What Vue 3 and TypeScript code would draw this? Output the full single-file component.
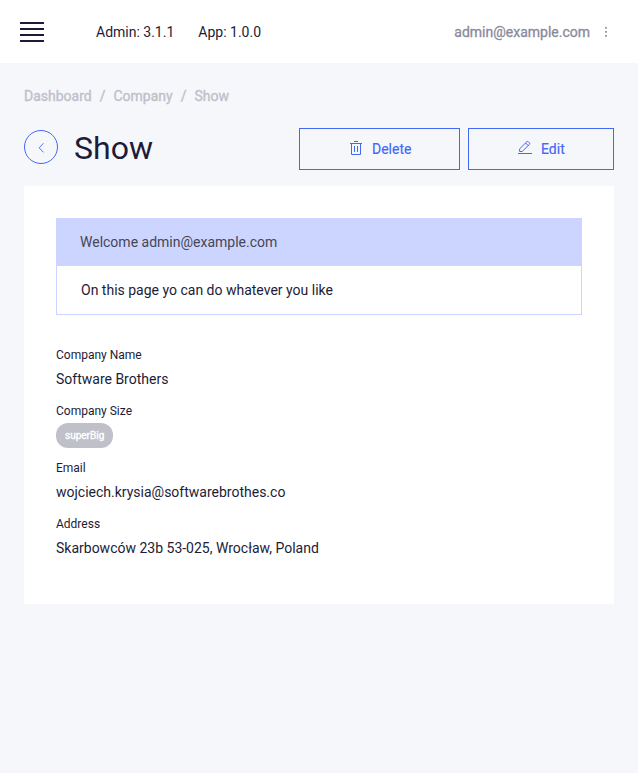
<script setup lang="ts">
interface Field {
  label: string
  value: string
  badge?: boolean
}

const email = 'admin@example.com'
const versions: string[] = ['Admin: 3.1.1', 'App: 1.0.0']
const crumbs: string[] = ['Dashboard', 'Company', 'Show']
const fields: Field[] = [
  { label: 'Company Name', value: 'Software Brothers' },
  { label: 'Company Size', value: 'superBig', badge: true },
  { label: 'Email', value: 'wojciech.krysia@softwarebrothes.co' },
  { label: 'Address', value: 'Skarbowców 23b 53-025, Wrocław, Poland' },
]
</script>

<template>
  <div class="app">
    <header class="topbar">
      <button class="menu" aria-label="Menu">
        <svg width="24" height="20" viewBox="0 0 24 20" fill="#1c1c38">
          <path d="M0 0h24v2H0zM0 6h24v2H0zM0 12h24v2H0zM0 18h24v2H0z" />
        </svg>
      </button>
      <div class="versions">
        <span v-for="version in versions" :key="version">{{ version }}</span>
      </div>
      <div class="user">
        <span>{{ email }}</span>
        <svg class="more" width="16" height="16" viewBox="0 0 16 16" fill="#898a9a">
          <path d="M7.100 3.100h1.700v1.700H7.100zM7.100 7.100h1.700v1.700H7.100zM7.100 11.100h1.700v1.700H7.100z" />
        </svg>
      </div>
    </header>

    <main class="content">
      <nav class="crumbs">
        <template v-for="(crumb, i) in crumbs" :key="crumb">
          <span v-if="i > 0" class="slash">/</span>
          <a>{{ crumb }}</a>
        </template>
      </nav>

      <div class="heading">
        <button class="back" aria-label="Back">
          <svg width="16" height="16" viewBox="0 0 16 16" fill="none" stroke="#4268f6">
            <path d="M10.500 4.200 6.200 8.800l4.300 4.600" stroke-width=".9" />
          </svg>
        </button>
        <h1>Show</h1>
        <div class="actions">
          <button class="action delete">
            <svg width="16" height="16" viewBox="0 0 16 16" fill="none" stroke="#4268f6">
              <path d="M2 3.500h12M6 1.500h4M3.500 3.500v11h9v-11M6.500 6v6M9.500 6v6" />
            </svg>
            <span>Delete</span>
          </button>
          <button class="action edit">
            <svg width="16" height="16" viewBox="0 0 16 16" fill="none" stroke="#4268f6">
              <path d="M1 13.500h14" />
              <path d="M2.600 11.500v-2.600l7.300-7.200q.7-.6 1.400 0l1.200 1.200q.6.700 0 1.400l-7.300 7.200zM8.600 3l2.600 2.600" />
            </svg>
            <span>Edit</span>
          </button>
        </div>
      </div>

      <section class="panel">
        <div class="message">
          <div class="message-title">Welcome {{ email }}</div>
          <div class="message-body">On this page yo can do whatever you like</div>
        </div>
        <dl class="fields">
          <div v-for="field in fields" :key="field.label" class="field">
            <dt>{{ field.label }}</dt>
            <dd>
              <span v-if="field.badge" class="badge">{{ field.value }}</span>
              <template v-else>{{ field.value }}</template>
            </dd>
          </div>
        </dl>
      </section>
    </main>
  </div>
</template>

<style>
body {
  background: #f6f7fb;
}
</style>

<style scoped>
.app {
  box-sizing: border-box;
  min-height: 773px;
  background: #f6f7fb;
  color: #1c1c38;
  font: 14px/16px Roboto, sans-serif;
}
.app * {
  box-sizing: border-box;
}
svg {
  display: block;
  flex: none;
}
button {
  margin: 0;
  padding: 0;
  background: none;
  border: 0;
  font: inherit;
}
.topbar {
  display: flex;
  align-items: center;
  height: 63px;
  padding: 0 24px 0 20px;
  background: #fff;
}
.menu {
  margin-top: 1px;
}
.versions {
  display: flex;
  gap: 24px;
  margin-left: 52px;
}
.user {
  display: flex;
  align-items: center;
  gap: 8px;
  margin-left: auto;
  margin-top: 1px;
  color: #898a9a;
  -webkit-text-stroke: 0.3px;
}
.content {
  padding: 25px 24px 0;
}
.crumbs {
  display: flex;
  gap: 8px;
  color: #c0c0ca;
  -webkit-text-stroke: 0.35px;
}
.heading {
  display: flex;
  align-items: flex-start;
  margin-top: 24px;
  height: 58px;
}
.back {
  display: flex;
  align-items: center;
  justify-content: center;
  width: 34px;
  height: 34px;
  margin-top: 2px;
  border: 1px solid #4268f6;
  border-radius: 50%;
}
h1 {
  margin: 0 0 0 16px;
  font-size: 32px;
  line-height: 40px;
  font-weight: 400;
}
.actions {
  display: flex;
  gap: 8px;
  margin-left: auto;
}
.action {
  display: flex;
  align-items: center;
  gap: 8px;
  height: 42px;
  padding-left: 48px;
  border: 1px solid #4268f6;
  color: #4268f6;
  -webkit-text-stroke: 0.15px;
}
.action svg {
  margin-bottom: 2px;
}
.delete {
  width: 161px;
}
.edit {
  width: 146px;
}
.panel {
  height: 418px;
  padding: 32px;
  background: #fff;
}
.message {
  border: 1px solid #ccd5ff;
  border-top: 0;
}
.message-title {
  height: 48px;
  padding: 16px 23px;
  background: #ccd5ff;
  color: #454655;
}
.message-body {
  padding: 16px 24px;
}
.fields {
  margin: 32px 0 0;
}
.field {
  margin-bottom: 16px;
}
dt {
  font-size: 12px;
  line-height: 16px;
}
dd {
  margin: 8px 0 0;
}
dd:has(.badge) {
  margin-top: 4px;
}
.badge {
  display: block;
  width: 57px;
  height: 25px;
  margin-bottom: -4px;
  padding: 0 9px;
  border-radius: 12px;
  background: #c0c0ca;
  color: #fff;
  font-size: 10px;
  line-height: 25px;
  -webkit-text-stroke: 0.35px;
}
</style>
